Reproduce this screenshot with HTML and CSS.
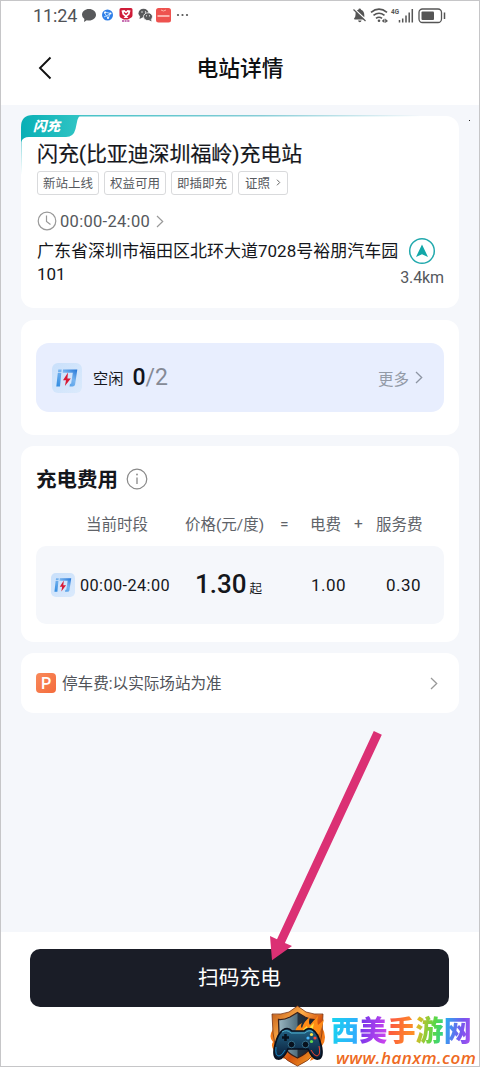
FILE: index.html
```html
<!DOCTYPE html>
<html lang="zh-CN">
<head>
<meta charset="utf-8">
<title>电站详情</title>
<link rel="stylesheet" href="styles.css">
</head>
<body>
<svg class="defs" width="0" height="0">
  <defs>
    <linearGradient id="blue" x1="0" x2="1" y1="1" y2="0"><stop offset="0" stop-color="#2f8ae0"/><stop offset=".6" stop-color="#7ab6f0"/><stop offset="1" stop-color="#2274d6"/></linearGradient>
    <linearGradient id="tile" x1="0" x2="1" y1="0" y2="1"><stop offset="0" stop-color="#c9e0fb"/><stop offset="1" stop-color="#dbeafc"/></linearGradient>
    <symbol id="flash" viewBox="0 0 30 30">
      <rect width="30" height="30" rx="6" fill="url(#tile)"/>
      <path d="M6.300 6.500h3.400l-.3 2.700H6zM5.800 10h3.500L8 23.500H4.300zM11 6.500h14.300l-2.200 15Q22.700 23.500 20.500 23.500H17.500l.5-2.700h1.100L20.800 9.700H10.700z" fill="url(#blue)"/>
      <path d="M16 9.500L11 17.200h3L12.900 23l5.900-7.600h-3.400z" fill="#d81a35"/>
    </symbol>
  </defs>
</svg>
<main class="screen">
  <header class="status">
    <span class="clock">11:24</span>
    <svg class="apps" width="110" height="20" viewBox="0 0 110 20">
      <path d="M8 3c4 0 7 2.600 7 5.800s-3 5.800-7 5.800q-1.200 0-2.200-.3L3 16l.4-2.900Q1 11.400 1 8.800C1 5.600 4 3 8 3z" fill="#58595b"/>
      <circle cx="26.500" cy="9" r="5.500" fill="#2f7fe8"/>
      <path d="M24 6l5.500 1.500M29 7l-1.500 5M23.500 7l3.500 5M23 11l6-3" stroke="#b9dcff" stroke-width="1"/>
      <circle cx="24" cy="6.500" r="1" fill="#fff"/><circle cx="29.500" cy="7.500" r="1" fill="#fff"/><circle cx="27" cy="12" r="1" fill="#fff"/>
      <path d="M38.500 3.500q0-1.500 1.500-1.500h10q1.500 0 1.500 1.500v6q0 1.500-2 2.500l-2.500 1.500h-4L40 12q-1.500-1-1.500-2.500z" fill="#cf1c38"/>
      <path d="M40.500 4.500l3-.5 1.500 1.500L46.500 4l3 .5-1 4-2.500 2 1.500 1.500h-5l1.500-1.500-2.500-2z" fill="#fff"/>
      <path d="M43 6.500l2 2 2-2" stroke="#cf1c38" stroke-width="1.200" fill="none"/>
      <path d="M41 15h8" stroke="#b7439b" stroke-width="1.600" stroke-dasharray="2 .6"/>
      <ellipse cx="62.500" cy="7.200" rx="5" ry="4.400" fill="#58595b"/><path d="M59 10l-.5 3 3-1.500z" fill="#58595b"/>
      <ellipse cx="67" cy="10.700" rx="4.500" ry="3.900" fill="#58595b" stroke="#fff" stroke-width=".8"/><path d="M68 14l2.500 1.400-.5-2.500z" fill="#58595b"/>
      <g fill="#fff"><circle cx="61" cy="6" r=".7"/><circle cx="64.500" cy="6" r=".7"/><circle cx="65.500" cy="9.800" r=".6"/><circle cx="68.500" cy="9.800" r=".6"/></g>
      <rect x="75" y="2" width="15" height="14.500" rx="2.500" fill="#ee524f"/>
      <path d="M80 4q2.500 2 5 0" stroke="#ffb0a5" fill="none"/><path d="M76.500 10h12" stroke="#ffd2cb" stroke-width="1.500"/>
      <g fill="#555"><circle cx="97" cy="9" r="1.100"/><circle cx="101.500" cy="9" r="1.100"/><circle cx="106" cy="9" r="1.100"/></g>
    </svg>
    <svg class="signals" width="96" height="20" viewBox="0 0 96 20">
      <path d="M2.500 13.500h9.700L3.800 5.800Q3.500 7 3.500 9q0 2-1.500 3.500zM5 4.500l7.300 6.800V9q0-4-3.200-5.200Q8.900 2.500 7.700 2.500T6.400 3.700Q5.500 4 5 4.500zM6 14.500h3.600q-.5 1.800-1.800 1.800T6 14.500z" fill="#555"/>
      <path d="M1.500 3.500l12 11.500" stroke="#555" stroke-width="1.200"/>
      <g fill="none" stroke="#555" stroke-width="1.700"><path d="M19 6.300q8-6.300 16 0"/><path d="M21.500 9.400q5.500-4.300 11 0"/><path d="M24 12.400q3-2.300 6 0"/></g>
      <circle cx="27" cy="14.800" r="1.300" fill="#555"/><path d="M32.500 12.600v4.500L29.800 15zM33.200 12.600v4.500L36 15z" fill="#555"/>
      <text x="39" y="8" class="net" textLength="8" lengthAdjust="spacingAndGlyphs">4G</text>
      <path d="M47.500 14v2.500M50.700 12.500v4M54 9.500v7M57.200 6.500v10M60.300 3v13.500" stroke="#555" stroke-width="1.500"/>
      <rect x="67" y="3" width="22.500" height="13.500" rx="3.500" fill="none" stroke="#555" stroke-width="1.300"/>
      <rect x="69.500" y="5.500" width="12.500" height="8.500" rx="1" fill="#555"/><path d="M92.500 6.500v6.500" stroke="#555" stroke-width="1.500"/>
    </svg>
  </header>
  <nav class="nav">
    <svg class="back" width="14" height="24" viewBox="0 0 14 24"><path d="M12.500 1.500L2 12l10.500 10.500" fill="none" stroke="#111" stroke-width="1.900"/></svg>
    <h1>电站详情</h1>
  </nav>

  <section class="content">
    <article class="card station">
      <svg class="ribbon" width="438" height="60" viewBox="0 0 438 60">
        <defs>
          <linearGradient id="teal" x1="0" x2="1"><stop offset="0" stop-color="#09afb5"/><stop offset="1" stop-color="#31c5c5"/></linearGradient>
          <linearGradient id="edge" gradientUnits="userSpaceOnUse" x1="0" x2="400" y1="0" y2="0"><stop offset="0" stop-color="#31bfc2"/><stop offset=".6" stop-color="#87cdd7"/><stop offset="1" stop-color="#87cdd7" stop-opacity="0"/></linearGradient>
          <linearGradient id="side" x1="0" x2="0" y1="0" y2="1"><stop offset="0" stop-color="#8ed9de"/><stop offset="1" stop-color="#8ed9de" stop-opacity="0"/></linearGradient>
        </defs>
        <rect x="12" y="0" width="390" height="1.500" fill="url(#edge)"/>
        <rect x="0" y="24" width="1" height="36" fill="url(#side)"/>
        <path d="M0 27V12Q0 0 12 0H60Q57 1.500 56 7L54.500 14Q52.500 22 45 22H8Q2 22 0 27z" fill="url(#teal)"/>
      </svg>
      <span class="flag">闪充</span>
      <h2>闪充(比亚迪深圳福岭)充电站</h2>
      <div class="tags">
        <span class="tag">新站上线</span><span class="tag">权益可用</span><span class="tag">即插即充</span>
        <span class="tag link">证照<svg width="5" height="7" viewBox="0 0 5 7"><path d="M1 .7l2.700 2.800L1 6.300" fill="none" stroke="#666" stroke-width="1"/></svg></span>
      </div>
      <div class="hours">
        <svg width="20" height="20" viewBox="0 0 20 20" fill="none" stroke="#999" stroke-width="1.200"><circle cx="10" cy="10" r="8.800"/><path d="M9.500 4.500v6l4 3"/></svg>
        <span>00:00-24:00</span>
        <svg width="8" height="13" viewBox="0 0 8 13"><path d="M1 1l5.700 5.500L1 12" fill="none" stroke="#999" stroke-width="1.200"/></svg>
      </div>
      <div class="place">
        <p>广东省深圳市福田区北环大道7028号裕朋汽车园<br>101</p>
        <div class="distance">
          <svg width="28" height="28" viewBox="0 0 28 28"><circle cx="14" cy="14" r="12.300" fill="none" stroke="#22a9ad" stroke-width="1.500"/><path d="M14 7.500L20 20l-6-2.700L8 20z" fill="#12a7a8"/></svg>
          <span>3.4km</span>
        </div>
      </div>
    </article>

    <article class="card idle">
      <div class="idle-row">
        <svg width="30" height="30"><use href="#flash"/></svg>
        <span class="idle-label">空闲</span>
        <span class="count"><b>0</b>/2</span>
        <span class="more">更多</span>
        <svg width="8" height="13" viewBox="0 0 8 13"><path d="M1 1l5.700 5.500L1 12" fill="none" stroke="#8d95a3" stroke-width="1.300"/></svg>
      </div>
    </article>

    <article class="card fees">
      <div class="fees-title">
        <h3>充电费用</h3>
        <svg width="22" height="22" viewBox="0 0 22 22"><circle cx="11" cy="11" r="9.800" fill="none" stroke="#888" stroke-width="1.200"/><path d="M11 9.500V16" stroke="#888" stroke-width="1.300"/><circle cx="11" cy="6.500" r=".9" fill="#888"/></svg>
      </div>
      <div class="fees-head"><span>当前时段</span><span>价格(元/度)</span><span class="sign">=</span><span>电费</span><span class="sign">+</span><span>服务费</span></div>
      <div class="fees-row">
        <svg width="24" height="24"><use href="#flash"/></svg>
        <span>00:00-24:00</span>
        <span class="price"><b>1.30</b><small>起</small></span>
        <span class="num">1.00</span>
        <span class="num">0.30</span>
      </div>
    </article>

    <article class="card parking">
      <span class="p-icon">P</span>
      <span class="p-text">停车费:以实际场站为准</span>
      <svg width="8" height="13" viewBox="0 0 8 13"><path d="M1 1l5.700 5.500L1 12" fill="none" stroke="#999" stroke-width="1.300"/></svg>
    </article>
  </section>

  <footer class="footer"><button class="scan">扫码充电</button></footer>

  <i class="speck"></i>
  <svg class="arrow" width="120" height="240" viewBox="0 0 120 240"><path d="M103.800 0L111.800 3.700 14.900 212 22 215 2 229.300 0 205 7 208.300z" fill="#db3074"/></svg>

  <aside class="brand">
    <svg width="58" height="62" viewBox="0 0 58 62">
      <defs><linearGradient id="gold" x1="0" x2="1" y1="0" y2="1"><stop offset="0" stop-color="#b95316"/><stop offset=".35" stop-color="#ffad48"/><stop offset=".6" stop-color="#d2500d"/><stop offset="1" stop-color="#ffbe32"/></linearGradient><linearGradient id="steel" x1="0" x2="1"><stop offset="0" stop-color="#9ab7c2"/><stop offset=".48" stop-color="#53707f"/><stop offset=".52" stop-color="#25333f"/><stop offset="1" stop-color="#161e2c"/></linearGradient><linearGradient id="pad" x1="0" x2="0" y1="0" y2="1"><stop offset="0" stop-color="#236486"/><stop offset="1" stop-color="#081a35"/></linearGradient></defs>
      <path d="M4 24Q-1 32 4 37q-3 4 2 10l4 5 6 2M53 22q6 11 0 19 1 6-4 11l-8 4" fill="#f57b18"/>
      <path d="M28.500 1L37 7q8 3 17 2l-1 19q-1 23-24.500 33Q5 51 4 28L3 9q9 1 17-2z" fill="url(#gold)" stroke="#7a3210" stroke-width=".8"/>
      <path d="M28.500 7.500L36 12q6 3 11.500 2.500L47 28q-1 17-18.500 25Q11 45 10 28l-.5-13.500Q15 15 21 12z" fill="url(#steel)" stroke="#39201b" stroke-width="1.300"/>
      <path d="M26 27q1-6 7-9-2 4 0 5 2-7 8-11-2 6 0 8 3-4 8-9-1 6 0 9 4-3 6-6-1 7-5 15z" fill="#ff8b16"/><path d="M33 27q2-4 5-6 0 4 3 1l4-4q-1 5-2 9z" fill="#ffe23a"/>
      <path d="M14 25q5-3 9 1h12q4-4 9-1 5 3 8 15 3 13-3 14-5 1-10-10H19Q14 55 9 54q-6-1-3-14 3-12 8-15z" fill="url(#pad)" stroke="#07101f" stroke-width="1.700"/>
      <path d="M13 27q5-3 9 1h14q4-4 8-1" fill="none" stroke="#4fb1cf" stroke-width="1"/>
      <path d="M7 42q-1 9 3 9 3 0 6-6" fill="none" stroke="#1786c3" stroke-width="1"/><path d="M50 41q2 9-2 10-3 0-6-6" fill="none" stroke="#ef432e" stroke-width="1"/>
      <path d="M16.500 29v7M13 32.500h7" stroke="#07111d" stroke-width="2.600"/><g fill="#08111d" stroke="#3d7d9b" stroke-width=".8"><circle cx="22.500" cy="39.500" r="3.300"/><circle cx="36.500" cy="39.500" r="3.300"/></g>
      <circle cx="42.500" cy="29.500" r="1.600" fill="#ffe348"/><circle cx="39" cy="33" r="1.600" fill="#4abaff"/><circle cx="46" cy="33" r="1.600" fill="#ff4a35"/><circle cx="42.500" cy="36.500" r="1.600" fill="#61dd51"/>
    </svg>
    <div class="brand-text">
      <div class="brand-name"><span class="c1">西</span><span class="c2">美</span><span class="c3">手</span><span class="c4">游</span><span class="c5">网</span></div>
      <div class="brand-url">www.hanxm.com</div>
    </div>
  </aside>
</main>
</body>
</html>
```
FILE: styles.css
```css
* { box-sizing: border-box; margin: 0; padding: 0; }
body { width: 480px; height: 1067px; overflow: hidden; font-family: Roboto, "Noto Sans CJK SC", sans-serif; color: #15171c; }
svg { display: block; flex: none; }
span { white-space: nowrap; }
.defs { position: absolute; }
.screen { position: relative; display: flex; flex-direction: column; width: 480px; height: 1067px; background: #fff; border: 1px solid #c6c6c8; }

.status { display: flex; height: 30px; padding: 5px 31px 0 32px; }
.clock { width: 48px; font-size: 18px; line-height: 19px; letter-spacing: -.1px; color: #505256; }
.signals { margin-left: auto; }
.net { font: bold 7px Roboto, sans-serif; fill: #555; }
.nav { display: grid; grid-template-columns: 60px 1fr 60px; align-items: center; height: 74px; }
.back { margin-left: 37px; }
.nav h1 { padding-top: 2px; text-align: center; font-size: 21.800px; line-height: 30px; font-weight: 500; color: #0d0f12; }

.content { display: flex; flex-direction: column; height: 827px; padding: 11px 20px 0; background: #f5f7fb; }
.card { background: #fff; border-radius: 13px; }
.station { position: relative; height: 192px; margin-bottom: 12px; padding: 24px 15px 0 16px; }
.ribbon { position: absolute; left: 0; top: -1px; }
.flag { position: absolute; left: 12px; top: 1px; font-size: 13.500px; line-height: 19px; font-weight: 900; font-style: italic; color: #fff; }
.station h2 { font-size: 21px; line-height: 28px; font-weight: 400; letter-spacing: -.1px; white-space: nowrap; -webkit-text-stroke: .2px #15171c; }
.tags { display: flex; gap: 5px; margin-top: 3px; }
.tag { display: flex; align-items: center; justify-content: center; width: 62px; height: 24px; padding-bottom: 1px; border: 1px solid #d9dadc; border-radius: 3px; font-size: 12.500px; color: #56595e; }
.tag.link { width: 50px; gap: 6px; }
.hours { display: flex; align-items: center; height: 24px; margin-top: 14px; font-size: 16.500px; letter-spacing: .3px; color: #55585d; }
.hours span { margin: 0 6px 0 3px; }
.place { display: flex; justify-content: space-between; margin-top: 7px; }
.place p { font-size: 17px; line-height: 23px; white-space: nowrap; }
.distance { display: flex; flex-direction: column; align-items: flex-end; margin-left: -10px; }
.distance svg { margin: -3px 8px 3px 0; }
.distance span { font-size: 16px; line-height: 20px; letter-spacing: -.1px; color: #55585d; }

.idle { height: 115px; margin-bottom: 11px; padding: 23px 15px; }
.idle-row { display: flex; align-items: center; height: 69px; padding: 0 21px 0 16px; border-radius: 13px; background: #e8eefe; }
.idle-label { margin: 0 9px 2px 11px; font-size: 15.200px; }
.count { font-size: 23px; color: #858a96; }
.count b { font-weight: 500; color: #10131c; }
.more { margin: 0 6px 0 auto; font-size: 15.500px; color: #939aa7; }

.fees { height: 196px; margin-bottom: 11px; padding: 20px 15px 0; }
.fees-title { display: flex; align-items: center; gap: 8px; height: 26px; }
.fees-title h3 { padding-top: 2px; font-size: 20.500px; line-height: 26px; font-weight: 700; }
.fees-head { display: grid; grid-template-columns: 99px 95px 30px 44px 22px 50px; padding: 21px 0 0 50px; font-size: 15.500px; line-height: 24px; color: #606369; }
.sign { line-height: 22px; }
.fees-row { display: grid; grid-template-columns: 29px 116px 115px 75px 50px; align-items: center; height: 78px; margin-top: 9px; padding-left: 15px; border-radius: 10px; background: #f5f7fb; font-size: 16.300px; letter-spacing: .4px; }
.price { margin-top: -3px; margin-left: -1px; }
.price b { margin-right: 3px; font-size: 26px; font-weight: 500; letter-spacing: 0; }
.price small { font-size: 12.500px; }
.num { font-size: 17px; letter-spacing: .5px; }

.parking { display: flex; align-items: center; height: 60px; padding: 0 21px 0 15px; }
.p-icon { width: 20px; height: 20px; border-radius: 4px; background: linear-gradient(135deg, #f98a5b, #f46b3c); color: #fff; font-size: 16px; line-height: 21px; font-weight: 500; text-align: center; }
.p-text { margin: 0 auto 2px 6px; font-size: 15.600px; color: #505359; }

.footer { padding: 17px 29px; }
.scan { display: block; width: 419px; height: 58px; padding-top: 1px; border: 0; border-radius: 10px; background: #1a1d27; color: #fff; font: 400 20.700px/57px Roboto, "Noto Sans CJK SC", sans-serif; }

.speck { position: absolute; left: 468px; top: 119px; width: 1px; height: 1px; background: #222; }
.arrow { position: absolute; left: 269px; top: 730px; }
.brand { position: absolute; left: 268px; top: 1004px; display: flex; gap: 4px; }
.brand-text { padding-top: 10px; }
.brand-name { display: flex; font-size: 28px; line-height: 34px; font-weight: 900; }
.brand-name span { width: 28.200px; background-clip: text; -webkit-background-clip: text; color: transparent; }
.c1 { background-image: linear-gradient(100deg, #16d6ee, #35a6ff); }
.c2 { background-image: linear-gradient(100deg, #6b35ea, #d345ee); }
.c3 { background-image: linear-gradient(100deg, #fb4f45, #ff9b20); }
.c4 { background-image: linear-gradient(100deg, #f5b51f, #58d847 60%, #26d0a0); }
.c5 { background-image: linear-gradient(100deg, #20b8f0, #7855ee 60%, #b44ff0); }
.brand-url { margin-top: -1px; padding-left: 5px; font: italic 600 17px/20px "Open Sans", sans-serif; letter-spacing: .5px; color: #ee6a23; }
```
